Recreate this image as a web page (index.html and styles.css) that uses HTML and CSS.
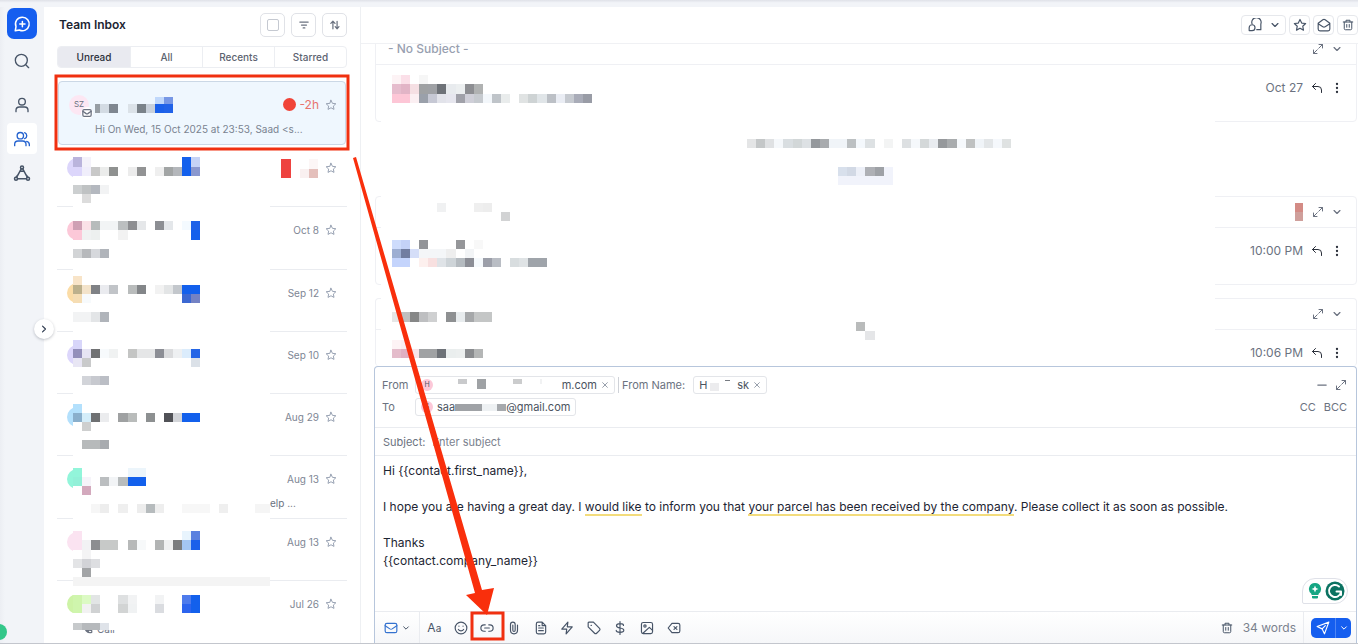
FILE: index.html
```html
<!DOCTYPE html>
<html lang="en">
<head>
<meta charset="utf-8">
<title>Team Inbox</title>
<link rel="stylesheet" href="styles.css">
</head>
<body>
<svg class="defs" aria-hidden="true">
  <symbol id="star" viewBox="0 0 24 24"><path d="M12 2.500l2.900 6.200 6.800.8-5 4.600 1.300 6.700-6-3.300-6 3.300 1.300-6.700-5-4.600 6.800-.8z"/></symbol>
  <symbol id="chev" viewBox="0 0 24 24"><path d="M5 8.500l7 7 7-7"/></symbol>
  <symbol id="expand" viewBox="0 0 24 24"><path d="M14 3h7v7M10 21H3v-7M21 3l-7.500 7.500M3 21l7.500-7.500"/></symbol>
  <symbol id="reply" viewBox="0 0 24 24"><path d="M9 3L3 9l6 6M3 9h11a7 7 0 0 1 7 7v5"/></symbol>
  <symbol id="dots" viewBox="0 0 24 24"><g fill="currentColor" stroke="none"><circle cx="12" cy="4" r="2.300"/><circle cx="12" cy="12" r="2.300"/><circle cx="12" cy="20" r="2.300"/></g></symbol>
  <symbol id="trash" viewBox="0 0 24 24"><path d="M2.500 6h19M8 6V2.500h8V6M4.500 6v13a2.500 2.500 0 0 0 2.500 2.500h10a2.500 2.500 0 0 0 2.500-2.500V6M9.500 11v5.500M14.500 11v5.500"/></symbol>
  <symbol id="mail" viewBox="0 0 24 24"><rect x="2" y="4" width="20" height="16" rx="3"/><path d="M2 8l8 5.500c1.300.800 2.700.800 4 0L22 8"/></symbol>
  <symbol id="close" viewBox="0 0 24 24"><path d="M5 5l14 14M19 5L5 19"/></symbol>
</svg>
<div class="topstrip"></div>
<div class="app">
  <nav class="rail" aria-label="Main">
    <button class="rail-btn brand" aria-label="Conversations"><svg class="i18" viewBox="0 0 24 24"><path d="M12.500 3a9 9 0 1 1-4 17L3 21l1-5.500A9 9 0 0 1 12.500 3zM12.500 8.500v7M9 12h7"/></svg></button>
    <button class="rail-btn search" aria-label="Search"><svg class="i16" viewBox="0 0 24 24"><circle cx="11" cy="11" r="9"/><path d="M18 18l4 4"/></svg></button>
    <button class="rail-btn" aria-label="My inbox"><svg class="i16" viewBox="0 0 24 24"><circle cx="12" cy="7" r="5"/><path d="M3 22v-2a5 5 0 0 1 5-5h8a5 5 0 0 1 5 5v2"/></svg></button>
    <button class="rail-btn active" aria-label="Team inbox"><svg class="i16" viewBox="0 0 24 24"><circle cx="9.500" cy="7" r="4.800"/><path d="M1 22v-2a5 5 0 0 1 5-5h7a5 5 0 0 1 5 5v2M16 2.500a4.800 4.800 0 0 1 0 9M19 15.500a5 5 0 0 1 4 4.500v2"/></svg></button>
    <button class="rail-btn" aria-label="Internal chat"><svg class="i18" viewBox="0 0 24 24"><circle cx="12" cy="4.500" r="2"/><circle cx="4" cy="19.500" r="2"/><circle cx="20" cy="19.500" r="2"/><path d="M11 6.500L5 17.500M13 6.500l6 11M6 19.500h12M9.500 9.500h5M7 14l-2.500 3M17 14l2.500 3"/></svg></button>
    <button class="collapse" aria-label="Expand menu"><svg class="i10 right" viewBox="0 0 24 24"><use href="#chev"/></svg></button>
    <span class="presence"></span>
  </nav>

  <section class="inbox">
    <header class="inbox-head">
      <h1>Team Inbox</h1>
      <label class="sq"><input type="checkbox" aria-label="Select all"></label>
      <button class="sq" aria-label="Filter"><svg class="i10" viewBox="0 0 24 24"><path d="M2 5h20M6 12h12M10 19h4"/></svg></button>
      <button class="sq" aria-label="Sort"><svg class="i10" viewBox="0 0 24 24"><path d="M7 21V3M2 8l5-5 5 5M17 3v18M12.500 16l4.500 5 4.500-5"/></svg></button>
    </header>
    <div class="tabs" role="tablist">
      <button class="tab on" role="tab">Unread</button><button class="tab" role="tab">All</button><button class="tab" role="tab">Recents</button><button class="tab" role="tab">Starred</button>
    </div>
    <article class="card-first">
      <div class="first-line">
        <span class="ava sz">SZ<i><svg class="i10" viewBox="0 0 24 24"><use href="#mail"/></svg></i></span>
        <svg class="mosaic" data-set="first" width="80" height="16" viewBox="95 96 80 16"></svg>
        <span class="late"><b></b>-2h</span>
        <button class="star" aria-label="Star"><svg class="i12"><use href="#star"/></svg></button>
      </div>
      <p>Hi On Wed, 15 Oct 2025 at 23:53, Saad &lt;s...</p>
    </article>
    <div class="rows">
      <article class="row"><span class="ava violet"></span><svg class="mosaic" data-set="due" width="38" height="19" viewBox="282 157 38 19"></svg><button class="star" aria-label="Star"><svg class="i12"><use href="#star"/></svg></button></article>
      <article class="row"><span class="ava pink"></span><time>Oct 8</time><button class="star" aria-label="Star"><svg class="i12"><use href="#star"/></svg></button></article>
      <article class="row"><span class="ava amber"></span><time>Sep 12</time><button class="star" aria-label="Star"><svg class="i12"><use href="#star"/></svg></button></article>
      <article class="row"><span class="ava violet"></span><time>Sep 10</time><button class="star" aria-label="Star"><svg class="i12"><use href="#star"/></svg></button></article>
      <article class="row"><span class="ava sky"></span><time>Aug 29</time><button class="star" aria-label="Star"><svg class="i12"><use href="#star"/></svg></button></article>
      <article class="row"><span class="ava mint"></span><time>Aug 13</time><button class="star" aria-label="Star"><svg class="i12"><use href="#star"/></svg></button><p class="tail">elp ...</p></article>
      <article class="row"><span class="ava rose"></span><time>Aug 13</time><button class="star" aria-label="Star"><svg class="i12"><use href="#star"/></svg></button></article>
      <article class="row"><span class="ava lime"></span><time>Jul 26</time><button class="star" aria-label="Star"><svg class="i12"><use href="#star"/></svg></button>
        <p class="call"><svg class="i10" viewBox="0 0 24 24"><path d="M4 3h4l2 6-3 2c1 3 3 5 6 6l2-3 6 2v4c-9 4-20-7-17-17z"/></svg>Call</p></article>
      <svg class="mosaic cover-list" data-set="list" width="197" height="478" viewBox="73 152 197 478"></svg>
    </div>
  </section>

  <main class="thread">
    <div class="actions">
      <button class="act wide" aria-label="Assign"><svg class="i14" viewBox="0 0 24 24"><path d="M7 10a8 8 0 1 1 15 0v10h-7M2 16.500a5 5 0 1 1 5 5H2z"/></svg><svg class="i10"><use href="#chev"/></svg></button>
      <button class="act" aria-label="Star"><svg class="i14"><use href="#star"/></svg></button>
      <button class="act" aria-label="Mark unread"><svg class="i14" viewBox="0 0 24 24"><path d="M2 9l8-6c1.300-.900 2.700-.900 4 0l8 6v10a3 3 0 0 1-3 3H5a3 3 0 0 1-3-3zM2 10l8 5c1.300.800 2.700.800 4 0l8-5"/></svg></button>
      <button class="act" aria-label="Delete"><svg class="i12"><use href="#trash"/></svg></button>
    </div>
    <div class="messages">
      <article class="msg">
        <header><h2>- No Subject -</h2><button aria-label="Expand"><svg class="i12"><use href="#expand"/></svg></button><button aria-label="Collapse"><svg class="i10"><use href="#chev"/></svg></button></header>
        <div class="msg-meta"><time>Oct 27</time><button aria-label="Reply"><svg class="i12 dark"><use href="#reply"/></svg></button><button aria-label="More"><svg class="i12 dark"><use href="#dots"/></svg></button></div>
      </article>
      <div class="activity"></div>
      <article class="msg">
        <header><h2></h2><svg class="mosaic flag" data-set="flag" width="10" height="18" viewBox="1292 203 10 18"></svg><button aria-label="Expand"><svg class="i12"><use href="#expand"/></svg></button><button aria-label="Collapse"><svg class="i10"><use href="#chev"/></svg></button></header>
        <div class="msg-meta"><time>10:00 PM</time><button aria-label="Reply"><svg class="i12 dark"><use href="#reply"/></svg></button><button aria-label="More"><svg class="i12 dark"><use href="#dots"/></svg></button></div>
      </article>
      <article class="msg last">
        <header><h2></h2><button aria-label="Expand"><svg class="i12"><use href="#expand"/></svg></button><button aria-label="Collapse"><svg class="i10"><use href="#chev"/></svg></button></header>
        <div class="msg-meta"><time>10:06 PM</time><button aria-label="Reply"><svg class="i12 dark"><use href="#reply"/></svg></button><button aria-label="More"><svg class="i12 dark"><use href="#dots"/></svg></button></div>
      </article>
      <svg class="mosaic cover-msg" data-set="msg" width="834" height="300" viewBox="381 66 834 300"></svg>
    </div>

    <form class="composer">
      <div class="addr">
        <div class="line"><span class="lab">From</span>
          <span class="chip from"><i class="dot">H</i><svg class="mosaic" width="100" height="12" viewBox="0 0 100 12"><path fill="#c9cacc" d="M16 0h9v5h-9z"/><path fill="#9fa2a5" d="M35 0h9v10h-9z"/><path fill="#cbcccd" d="M71 0h9v5h-9z"/><path fill="#f1f2f3" d="M98 0h2v5h-2z"/></svg><span class="end">m.com</span><button type="button" aria-label="Remove"><svg class="i8"><use href="#close"/></svg></button></span>
          <span class="sep"></span><span>From Name:</span>
          <span class="chip name"><span>H</span><svg class="mosaic" width="26" height="12" viewBox="0 0 26 12"><path fill="#ececee" d="M3 4h9v8H3z"/><path fill="#777b82" d="M18 1h5v1h-5z"/></svg><span class="end">sk</span><button type="button" aria-label="Remove"><svg class="i8"><use href="#close"/></svg></button></span>
          <span class="grow"></span><button type="button" aria-label="Minimise"><svg class="i10" viewBox="0 0 24 24"><path d="M2 12h20"/></svg></button><button type="button" aria-label="Expand"><svg class="i12"><use href="#expand"/></svg></button>
        </div>
        <div class="line"><span class="lab">To</span>
          <span class="chip to"><i class="dot">S</i><span>saa</span><svg class="mosaic" width="51" height="9" viewBox="0 0 51 9"><path fill="#9fa2a6" d="M0 1h27v7H0z"/><path fill="#eef1f3" d="M27 1h15v7H27z"/><path fill="#a6a9ad" d="M42 1h9v7h-9z"/></svg><span>@gmail.com</span></span>
          <span class="grow"></span><button type="button" class="cc">CC</button><button type="button" class="cc">BCC</button>
        </div>
      </div>
      <div class="subject"><label for="subject">Subject:</label><input id="subject" type="text" placeholder="Enter subject"></div>
      <div class="editor" contenteditable="true" role="textbox" aria-label="Message">
        <p>Hi {{contact.first_name}},</p><p><br></p>
        <p>I hope you are having a great day. I <u>would like</u> to inform you that <u>your parcel has been received by the company</u>. Please collect it as soon as possible.</p><p><br></p>
        <p>Thanks</p><p>{{contact.company_name}}</p>
      </div>
      <div class="grammar"><svg width="14" height="18" viewBox="0 0 14 18"><path class="bulb" d="M7 1a6 6 0 0 1 3.500 10.900V13h-7v-1.100A6 6 0 0 1 7 1zM4 14h6v1.500a1 1 0 0 1-1 1H5a1 1 0 0 1-1-1z"/><path class="spark" d="M7 3.500l1 2.500 2.500 1L8 8l-1 2.500L6 8 3.500 7 6 6z"/></svg><svg width="20" height="20" viewBox="0 0 20 20"><circle class="gbg" cx="10" cy="10" r="9.500"/><path class="gg" d="M14 5.500A6 6 0 1 0 16 10.500h-4.500M16 10.500v3.500"/></svg></div>
      <footer class="tools">
        <button type="button" class="channel" aria-label="Channel"><svg class="i14 blue"><use href="#mail"/></svg><svg class="i8"><use href="#chev"/></svg></button>
        <div class="toolset">
          <button type="button" class="aa" aria-label="Text format">A<small>a</small></button>
          <button type="button" aria-label="Emoji"><svg class="i14" viewBox="0 0 24 24"><circle cx="12" cy="12" r="10"/><path d="M7.500 14.500c2 3.300 7 3.300 9 0M8.500 8.500v.500M15.500 8.500v.500"/></svg></button>
          <button type="button" aria-label="Link"><svg class="i14" viewBox="0 0 24 24"><path d="M9 17.500H7a5.500 5.500 0 0 1 0-11h2M15 6.500h2a5.500 5.500 0 0 1 0 11h-2M8 12h8"/></svg></button>
          <button type="button" aria-label="Attach"><svg class="i14" viewBox="0 0 24 24"><path d="M18 7v9a6 6 0 0 1-12 0V6a4 4 0 0 1 8 0v10a2 2 0 0 1-4 0V7"/></svg></button>
          <button type="button" aria-label="Template"><svg class="i14" viewBox="0 0 24 24"><path d="M14 2H7a3 3 0 0 0-3 3v14a3 3 0 0 0 3 3h10a3 3 0 0 0 3-3V8zM14 2v6h6M8 12h8M8 16.500h8M8 8h2"/></svg></button>
          <button type="button" aria-label="Trigger"><svg class="i14" viewBox="0 0 24 24"><path d="M13.500 2L3 14h8.500l-1 8L21 10h-8.500z"/></svg></button>
          <button type="button" aria-label="Tag"><svg class="i14" viewBox="0 0 24 24"><path d="M2 3v7l11 11c1 1 2.500 1 3.500 0l5-5c1-1 1-2.500 0-3.500L11 2H3zM7 7.500h.500"/></svg></button>
          <button type="button" aria-label="Payment"><svg class="i14" viewBox="0 0 24 24"><path d="M18 7.500C18 5.500 16 4.500 12 4.500S6 6 6 8.200s2 3.300 6 3.800 6.500 1.500 6.500 4-2.500 3.500-6.500 3.500-6.500-1-6.500-3.500M12 1v22"/></svg></button>
          <button type="button" aria-label="Image"><svg class="i14" viewBox="0 0 24 24"><rect x="2.500" y="2.500" width="19" height="19" rx="3"/><circle cx="8.500" cy="8.500" r="2"/><path d="M5 21L16 11l5.500 5"/></svg></button>
          <button type="button" aria-label="Clear"><svg class="i14" viewBox="0 0 24 24"><path d="M8.500 4H19a3 3 0 0 1 3 3v10a3 3 0 0 1-3 3H8.500L2 12zM12 9.500l5 5M17 9.500l-5 5"/></svg></button>
        </div>
        <span class="grow"></span>
        <button type="button" class="bin" aria-label="Discard"><svg class="i12"><use href="#trash"/></svg></button>
        <span class="words">34 words</span>
        <div class="sendwrap"><button type="button" class="send" aria-label="Send"><svg class="i14" viewBox="0 0 24 24"><path d="M22 2L2 9.500l8.500 4L14.500 22zM10.500 13.500L16 8"/></svg></button><button type="button" class="send more" aria-label="Send options"><svg class="i8"><use href="#chev"/></svg></button></div>
      </footer>
    </form>
  </main>
</div>
<svg class="notes" width="1358" height="644" viewBox="0 0 1358 644" aria-hidden="true">
  <rect x="56" y="76" width="292" height="73"/>
  <rect x="472" y="613" width="31" height="26"/>
  <path d="M353 158l3-1L482 590l12-2-7 27-21-20 9-2z"/>
</svg>
<script src="mosaic.js"></script>
</body>
</html>
```

FILE: styles.css
```css
* { box-sizing: border-box; }
body { margin: 0; min-height: 100vh; display: flex; flex-direction: column; position: relative; overflow-x: hidden; background: #fff; color: #6b7280; font: 11px/16px Inter, "Liberation Sans", sans-serif; border-bottom: 1px solid #c3c6cd; }
h1, h2, p { margin: 0; }
button { border: 0; padding: 0; margin: 0; background: none; color: inherit; font: inherit; display: flex; align-items: center; justify-content: center; }
svg { flex: none; fill: none; stroke: currentColor; stroke-width: 2; stroke-linecap: round; stroke-linejoin: round; display: block; }
.defs { position: absolute; width: 0; height: 0; }
.mosaic { stroke: none; shape-rendering: crispEdges; }
.i8 { width: 8px; height: 8px; stroke-width: 3; }
.i10 { width: 10px; height: 10px; stroke-width: 3; }
.i12 { width: 12px; height: 12px; }
.i14 { width: 14px; height: 14px; }
.i16 { width: 16px; height: 16px; }
.i18 { width: 18px; height: 18px; }
.right { transform: rotate(-90deg); }
.dark { color: #2b303b; }
.blue { color: #3472cf; }
.grow { flex: 1; }

.topstrip { height: 7px; background: linear-gradient(#dfe1e8, #f2f4f8 40%); }
.app { flex: 1; display: flex; min-height: 0; }

.rail { position: relative; width: 44px; flex: none; display: flex; flex-direction: column; align-items: center; gap: 3px; padding-top: 1px; background: linear-gradient(90deg, #eceef3, #f2f4f8 5px); color: #475467; }
.rail-btn { width: 30px; height: 31px; border-radius: 4px; }
.brand { background: #155eef; color: #fff; border-radius: 7px; margin-bottom: 3px; }
.search { margin-bottom: 10px; }
.active { background: #fff; color: #2563cf; }
.collapse { position: absolute; left: 34px; top: 312px; width: 20px; height: 20px; border-radius: 50%; background: #fff; color: #344054; box-shadow: 0 1px 3px #10182840; z-index: 2; }
.presence { position: absolute; left: -9px; bottom: 3px; width: 16px; height: 16px; border-radius: 50%; background: #34c78a; }

.inbox { width: 317px; flex: none; display: flex; flex-direction: column; padding: 0 13px; border-right: 1px solid #eef0f3; border-radius: 5px 0 0 0; }
.inbox-head { display: flex; align-items: center; gap: 6px; height: 36px; }
.inbox-head h1 { flex: 1; padding-left: 2px; font-size: 12px; font-weight: 600; color: #1d2533; }
.sq { display: flex; align-items: center; justify-content: center; width: 25px; height: 24px; border: 1px solid #e0e2e7; border-radius: 5px; }
.sq input { appearance: none; margin: 0; width: 12px; height: 12px; border: 1px solid #c5c9d1; border-radius: 2px; }
.tabs { display: grid; grid-template-columns: repeat(4, 1fr); height: 22px; margin-top: 3px; border: 1px solid #eceef2; border-radius: 4px; overflow: hidden; }
.tab { font-size: 10px; font-weight: 500; color: #5c6370; border-left: 1px solid #eceef2; }
.tab.on { background: #e9eaf0; color: #2b303b; border-left: 0; }
.card-first { margin: 13px 1px 0; height: 64px; padding: 11px 8px 0 10px; background: #eff7fe; border: 1px solid #cbd8e6; border-radius: 4px; }
.first-line { display: flex; align-items: center; height: 23px; }
.ava { display: block; flex: none; width: 20px; height: 20px; border-radius: 50%; }
.sz { position: relative; background: #fce7f3; color: #6b7280; font-size: 8px; line-height: 19px; text-align: center; }
.sz i { position: absolute; left: 12px; top: 12px; display: flex; align-items: center; justify-content: center; width: 12px; height: 12px; border-radius: 50%; background: #fff; }
.first-line .mosaic { margin-left: 6px; }
.late { margin-left: auto; display: flex; align-items: center; gap: 3px; color: #e8736d; font-size: 12px; }
.late b { width: 13px; height: 13px; border-radius: 50%; background: #f04438; }
.star { margin-left: 6px; color: #98a2b3; }
.card-first p { padding-left: 26px; padding-top: 5px; font-size: 10px; color: #7a8390; white-space: nowrap; }
.rows { position: relative; flex: 1; display: grid; grid-auto-rows: 1fr; }
.row { display: flex; flex-wrap: wrap; align-content: flex-start; align-items: center; padding: 13px 10px 0; border-bottom: 1px solid #eaecf0; }
.row:nth-of-type(8) { border-bottom: 0; }
.row time, .row > .mosaic { margin-left: auto; font-size: 10px; color: #7e8694; }
.tail { width: 100%; padding-left: 203px; font-size: 10px; line-height: 28px; }
.violet { background: #dcd6fb; }
.pink { background: #fcc8d8; }
.amber { background: #fbdca6; }
.sky { background: #b3e0fc; }
.mint { background: #92f5da; }
.rose { background: #fbe3f1; }
.lime { background: #cdf3a6; }
.cover-list { position: absolute; left: 16px; top: 7px; background: #fff; }
.call { display: flex; align-items: center; gap: 4px; width: 100%; padding: 7px 0 0 16px; font-size: 10px; }

.thread { flex: 1; min-width: 0; display: flex; flex-direction: column; }
.actions { display: flex; align-items: center; justify-content: flex-end; gap: 3px; height: 37px; border-bottom: 1px solid #f0f1f4; color: #475467; }
.act { width: 21px; height: 20px; border: 1px solid #e6e8ec; border-radius: 4px; }
.act.wide { width: 45px; gap: 8px; }
.messages { position: relative; flex: 1 1 0; min-height: 0; overflow: hidden; display: flex; flex-direction: column; justify-content: flex-end; padding: 0 1px 0 14px; }
.msg { flex: none; height: 89px; border: 1px solid #eff0f4; border-radius: 4px; margin-bottom: 13px; }
.msg.last { height: 68px; margin: 0; border-bottom: 0; }
.msg header { display: flex; align-items: center; gap: 8px; height: 31px; padding: 0 14px 0 12px; border-bottom: 1px solid #eff0f4; }
.msg h2 { flex: 1; font-size: 12px; line-height: 12px; font-weight: 500; color: #98a0b0; }
.flag { margin-right: 1px; }
.msg-meta { display: flex; align-items: center; justify-content: flex-end; gap: 8px; padding: 15px 13px 0; font-size: 12px; }
.activity { flex: none; height: 61px; }
.cover-msg { position: absolute; left: 20px; top: 22px; background: #fff; }

.composer { position: relative; flex: none; margin: 0 1px 0 13px; border: 1px solid #b7c6dc; border-bottom: 0; border-radius: 4px 4px 0 0; }
.addr { padding: 9px 9px 11px 7px; border-bottom: 1px solid #eaecf0; }
.line { display: flex; align-items: center; gap: 4px; height: 18px; }
.line + .line { margin-top: 4px; }
.lab { width: 29px; }
.line > button { margin-left: 4px; }
.chip { display: flex; align-items: center; height: 18px; padding: 0 5px; border: 1px solid #e3e5e9; border-radius: 3px; color: #4b5360; }
.chip.from { width: 200px; }
.chip.name { width: 74px; margin-left: 4px; }
.chip .end { margin-left: auto; }
.chip button { margin-left: 4px; color: #98a0ac; }
.dot { width: 12px; height: 12px; margin-right: 4px; border-radius: 50%; background: #fcc8d8; font-size: 7px; font-style: normal; line-height: 12px; text-align: center; }
.from .mosaic { margin-left: 5px; }
.sep { width: 1px; height: 16px; margin: 0 -1px; background: #cfd2d8; }
.cc { color: #6b7280; }
.subject { display: flex; align-items: center; gap: 7px; height: 28px; padding: 0 8px; border-bottom: 1px solid #eaecf0; }
.subject input { flex: 1; border: 0; outline: 0; padding: 0; font: inherit; color: inherit; background: none; }
.subject input::placeholder { color: #7b828e; opacity: 1; }
.editor { min-height: 155px; padding: 6px 8px; color: #1d2533; font-size: 12px; line-height: 18px; outline: 0; }
.editor u { text-decoration: none; border-bottom: 2px solid #f3dc7c; }
.grammar { position: absolute; right: 8px; bottom: 39px; display: flex; align-items: center; gap: 3px; padding: 2px 2px 2px 5px; height: 26px; width: 46px; border: 1px solid #dfe1e8; border-radius: 13px 13px 13px 2px; background: #fff; }
.grammar svg { stroke: none; }
.bulb { fill: #15a683; }
.spark { fill: #fff; }
.gbg { fill: #0b7261; }
.gg { stroke: #fff; stroke-width: 2; }
.tools { display: flex; align-items: center; height: 32px; border-top: 1px solid #eaecf0; color: #475467; background: linear-gradient(#fff, #f6f7f9); }
.channel { gap: 4px; width: 45px; height: 31px; border-right: 1px solid #eaecf0; }
.toolset { display: grid; grid-template-columns: repeat(10, 1fr); width: 266px; margin-left: 1px; }
.aa { font-size: 12px; align-items: baseline; }
.aa small { font-size: 10px; }
.words { margin: 0 7px 0 10px; font-size: 12px; color: #7b828e; }
.sendwrap { display: flex; height: 31px; align-items: center; padding: 0 5px 0 7px; border-left: 1px solid #eaecf0; }
.send { width: 24px; height: 20px; background: #155eef; color: #fff; border-radius: 5px 0 0 5px; }
.send.more { width: 16px; border-left: 1px solid #4f86f5; border-radius: 0 5px 5px 0; }

.notes { position: absolute; left: 0; top: 0; z-index: 3; pointer-events: none; stroke: #f03010; stroke-width: 3; stroke-linejoin: miter; }
.notes path { fill: #f92f0c; stroke: none; }
```

FILE: mosaic.js
```js
// Each entry reads "row:column colour colour ..."; "-" leaves a cell empty.
const B = "1360ec";
const sets = {
  first: ["10:17 c0d8fb 7797e5", "11:10 979ea4 d3dbe3 7f8790 - dbe2e8 7a8289 c8d0da 1a60ea 2062e8"],
  due: ["17:31 ee4340 - - fcf6f6", "18:31 ee4340 - f9f0f0 e4bfbb"],
  flag: ["22:142 d38b85", "23:142 cf9f9b"],
  list: [
    "17:8 bab4dc f4f2fa", "17:20 " + B + " c5d3f6",
    "18:8 dcd6fb f0eefb c8c8c8 ebeceb 8f9190 - ececec 929394 - efefef a2a5a5 b4b7bb " + B + " 8a98cf",
    "20:8 cccfd0 bfc2c3 b4b8bf f2f3f4", "21:9 dcdcdc",
    "24:8 cfa0b4 fae1e7 b7bbbb f2f4f5 f2f4f5 bcbfc0 8d8e91 e5e7e9 - 8c8e93 e4e7ea - f4faff 2062e8",
    "25:8 fcc8d8 f0f2f2 edf0ef - - f2f2f2", "25:21 " + B, "27:8 d2d4d6 b7b9bc d6d8dc b0b4ba",
    "30:8 f8e4c8",
    "31:8 bcb08c f3e3ca 7f8185 eaebef c1c4c8 - b9bcbc 838689 - f2f2f2 e3e5e6 c3c7cc " + B + " " + B,
    "32:8 f5ddb4 f7fafc", "32:20 3c68d2 7482c4", "34:8 f2f3f4 f2f3f4 e3e5e7 b0b4ba",
    "37:8 d8d6fa",
    "38:8 938fba e6e4f3 707173 f7fafc f0f2f2 - c4c5c4 e5e6e7 e5e6e7 8c8e95 dadbdd eef0f2 dbecfc 2465e6",
    "39:8 e8e6f4 c9cacb", "39:21 dbe1e8", "41:9 d2d4d9 c7c9cf bbbec5",
    "44:8 b3e0fc",
    "45:8 8aafcc d4edf9 6e7072 ebecee - 9fa1a2 b9bcbb - 8d9091 - 515257 d3d5d9 " + B + " " + B,
    "46:9 cecfcf", "48:9 b7babb b7babb a8abaf",
    "51:8 92f5da", "51:14 ecf5fb ecf5fb", "52:8 92f0d8 f6f4fa - bbbec0 f2f4f6 b8bcbd " + B + " " + B,
    "53:9 d3a9bd", "55:10 f6f6f6 ededed - efefef - ededed b6bbbd eeeeee - - f7f7f7 f7f7f7 f7f7f7 - efefef - - - f5f5f5 f5f5f5",
    "58:8 fbe3f1", "58:20 e8f4fd 5a80df",
    "59:8 fbe3f1 f2f2f4 8c8d90 c7c9c8 c7c9c8 - b7b9b9 f7f9fa - b2b4b4 eff0f1 7a7c7e a4c6f2 1a60ea",
    "60:9 f4f4f5", "61:8 e3e4e6 d2d3d7 dddee1", "62:9 a2a4a6", "63:8" + " f4f4f4".repeat(22),
    "65:8 cff5ad dcfac4 e2e5e5 - - dee0e1 f2f3f4 - - f2f3f4 - - 4e7bec " + B,
    "66:8 cff5ad f2f2f2 d0d2d3 - - d2d4d4 f0f2f3 - - dadce0 - - 2c64ee " + B,
    "68:8 c6c9cb b6b9bc b6b9bc dfe3e9"
  ],
  msg: [
    "8:43 fdf3f5 fbdfe8 - f6f6f6",
    "9:43 e6bccd e2b4c6 f5dfe3 9fa1a3 9fa1a5 6e7278 e8ebee eceff0 8d8e92 b0b2b2",
    "10:43 fdc6d6 fdc6d6 fbeff2 9aa0aa c6c8d4 e2e3ea e6e6ee a0a1a9 cfcfd8 c6cacf f3f7fb bfc4c9 e9ecec - e0e3e3 ced3d4 e0e5e8 bcc0c6 eaedf4 c6cad0 a9acb8 999ca6",
    "15:82 e4e5e6 c4c7c8 dfe1e3 f5f8fb d9dee1 d2d7d8 dde1e4 94989c a8abae f0f4f8 f0f4f8 bcc0c2 f4f8fc dde1e3 - f3f4f4 - dde0e2 f5f8fb d4d8d9 e9ecf0 96999c a9acae f6f9fc bfc1c1 f0f4f8 e3e6e8 f5f8fc dfe2e2",
    "18:92 d8e0ec d2d9e5 edf0f8 aeb0b5 9ea1a6 f1f3fb", "19:92" + " f1f3fb".repeat(6),
    "22:48 f0f1f2 - - - efefef ededed", "23:55 d2d3d4",
    "26:43 cedcfc c4d2f8 - 929498 - - - 959699 - f8f8f8",
    "27:43 9daed2 717da0 d5def8 f4f6f8 f4f6f8 f4f6f8 eeeeee - f2f4f6",
    "28:43 c4d4fc c4d4fc - fdf0ee f8e0e0 dfe3e7 ced4d8 b5bbc0 8c8e96 f5f9fc 9c9fa9 b9bdc4 - d8dddf dfe3e5 9fa4aa 9fa4aa",
    "34:43 e6e6e6 c0c0c0 868787 bebfc1 cfd0d1 - 8e9092 e8ecee a6a8aa c4c6c6 c4c6c6",
    "35:94 b9bbbb", "36:95 e5e6e8", "37:43 fdf3f5 faeef2",
    "38:43 e4bccb e0b0c2 f8e4e8 a0a2a4 a0a2a4 6e7278 eaeeee ecefef 8a8c8f b4b6b6"
  ]
};
const px = c => Math.round(c * 9.11);
const py = r => Math.round(2.4 + r * 9.12);
document.querySelectorAll("[data-set]").forEach(svg => {
  sets[svg.dataset.set].forEach(line => {
    const [head, ...colours] = line.split(" ");
    const [row, col] = head.split(":").map(Number);
    colours.forEach((colour, i) => {
      if (colour === "-") return;
      const cell = document.createElementNS("http://www.w3.org/2000/svg", "rect");
      cell.setAttribute("x", px(col + i));
      cell.setAttribute("y", py(row));
      cell.setAttribute("width", px(col + i + 1) - px(col + i));
      cell.setAttribute("height", py(row + 1) - py(row));
      cell.setAttribute("fill", "#" + colour);
      svg.append(cell);
    });
  });
});
```
